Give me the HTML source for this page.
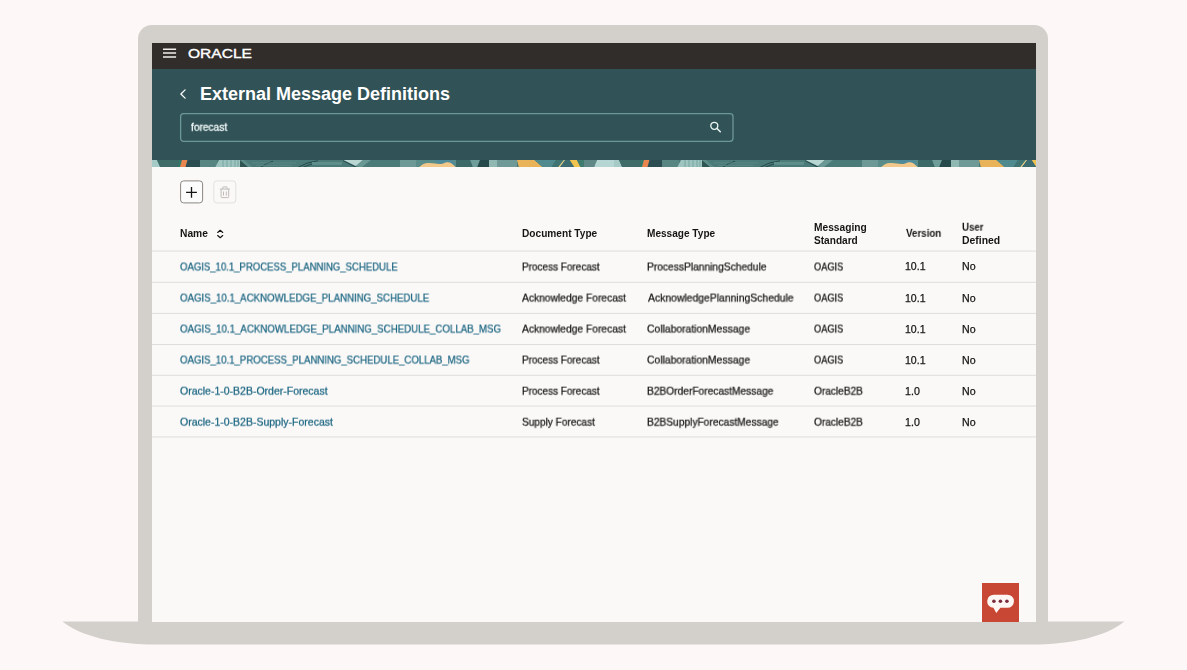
<!DOCTYPE html>
<html lang="en">
<head>
<meta charset="utf-8">
<title>External Message Definitions</title>
<style>
  html, body { margin: 0; padding: 0; }
  body {
    width: 1187px; height: 670px; overflow: hidden; position: relative;
    background: #fdf8f7;
    font-family: "Liberation Sans", sans-serif;
    color: #161513;
  }
  .abs { position: absolute; }
  /* laptop */
  .bezel { left: 138px; top: 25px; width: 910px; height: 610px; background: #d3cfcb; border-radius: 14px 14px 0 0; }
  .base { left: 0; top: 0; width: 1187px; height: 670px; }
  .screen { left: 152px; top: 43px; width: 884px; height: 579px; background: #fbf9f8; overflow: hidden; }
  /* screen content: coordinates relative to the screen (subtract 152, 43) */
  .topbar { left: 0; top: 0; width: 884px; height: 26px; background: #312d2a; }
  .hero { left: 0; top: 26px; width: 884px; height: 98.3px; background: #315357; }
  .strip { left: 0; top: 116.5px; width: 884px; height: 7.8px; }
  .title { left: 48px; top: 39px; font-size: 18px; font-weight: bold; color: #fff; white-space: nowrap; line-height: 24px; }
  .searchtxt { left: 39px; top: 78px; line-height: 12px; font-size: 10.5px; color: #f4fbfa; white-space: nowrap; transform-origin: 0 50%; will-change: transform; transform: translateY(-0.2px) scaleX(0.967); -webkit-text-stroke: 0.3px currentColor; }
  .btn { top: 138px; width: 23px; height: 23px; box-sizing: border-box; border-radius: 3px; background: #fff; }
  .btn.add { left: 28px; border: 1px solid #8b8783; }
  .btn.del { left: 61px; border: 1px solid #e3dfdc; background: #fbf9f8; }
  .th { font-size: 10px; font-weight: bold; line-height: 12px; white-space: nowrap; color: #161513; }
  .td { font-size: 10.5px; line-height: 12px; white-space: nowrap; color: #161513; }
  .td { -webkit-text-stroke: 0.25px currentColor; }
  .lnk { color: #1a6581; }
  .th, .td { transform-origin: 0 50%; will-change: transform; }
  .hl { left: 0; width: 884px; height: 1px; background: #e6e2df; }
  .chat { left: 830px; top: 540px; width: 37px; height: 39px; background: #c74634; }
</style>
</head>
<body>
<div class="abs bezel"></div>
<svg class="abs base" width="1187" height="670" viewBox="0 0 1187 670">
  <path d="M62.5 621.5 H1124.3 C1106 636.5 1072 644.5 1030 644.5 H157 C115 644.5 81 636.5 62.5 621.5 Z" fill="#d3cfcb"/>
</svg>
<div class="abs screen">
  <div class="abs topbar"></div>
  <div class="abs hero"></div>
  <svg class="abs strip" width="884" height="8" viewBox="0 0 884 8" preserveAspectRatio="none">
    <defs><g id="leafband">
      <rect x="0" y="0" width="462" height="8" fill="#4b7b78"/>
      <polygon points="0,0 5,0 8.5,8 0,8" fill="#a6cbc6"/>
      <rect x="8" y="0" width="19" height="8" fill="#3f6b69"/>
      <polygon points="5,0 8,0 11,8 8.5,8" fill="#3f6b69"/>
      <polygon points="27.5,0 30,0 28,8 25.5,8" fill="#2f7a68"/>
      <polygon points="30,0 35.6,0 33.4,8 27.8,8" fill="#e98650"/>
      <polygon points="35.6,0 48,0 48,8 33.4,8" fill="#2b4c50"/>
      <rect x="48" y="0" width="17" height="8" fill="#568582"/>
      <polygon points="67,0 88,0 88,8 63,8" fill="#9ec4bf"/>
      <path d="M71 0v8M75 0v8M79 0v8M83 0v8M86 0v8" stroke="#6f9d99" stroke-width="0.8"/>
      <polygon points="88,0 97,8 88,8" fill="#2f5553"/>
      <polygon points="88,0 92,0 101,8 97,8" fill="#5d8c88"/>
      <path d="M146 7.5 Q155 2 166 0.8 M150 8 Q158 4 167 2.5 M108 8 Q114 3.2 121 1.2" stroke="#23464a" stroke-width="1" fill="none"/>
      <rect x="160" y="2" width="30" height="3" fill="#5f8f8b"/>
      <path d="M100 3h44M104 5.5h36" stroke="#5a8986" stroke-width="0.9"/>
      <polygon points="191,0 211,0 204,6.2" fill="#b8d7d3"/>
      <path d="M191 0.5 L204 7.5" stroke="#23464a" stroke-width="1"/>
      <polygon points="211,0 219,0 209,8 204,6.2" fill="#6a9894"/>
      <rect x="248" y="0" width="16" height="8" fill="#6c9895"/>
      <rect x="264" y="0" width="40" height="8" fill="#5a8d8a"/>
      <polygon points="282,0 300,0 304,5 286,3" fill="#4f8a9a"/>
      <path d="M266.3 8 C270 5 272 3.4 276 3.2 C282 3 284 4.4 288 4.2 C292 4 293 2.2 296 2.4 C300 2.8 302 6 304.5 8 Z" fill="#f3c98b"/>
      <rect x="304" y="0" width="13" height="8" fill="#3c6a68"/>
      <polygon points="318,0 328,0 325,8 321,8" fill="#6f9e9a"/>
      <polygon points="328,0 337,0 337,8 325,8" fill="#264a4c"/>
      <polygon points="317,0 318,0 321,8 317,8" fill="#3c6a68"/>
      <rect x="337" y="0" width="8" height="8" fill="#8fb8b3"/>
      <rect x="345" y="0" width="20" height="8" fill="#6f9996"/>
      <path d="M365 0 H382.5 C386 3 389 6 391.5 8 H367 Z" fill="#e9b35a"/>
      <path d="M382.5 0 H404 L399 8 H391.5 C389 6 386 3 382.5 0 Z" fill="#4f8a8f"/>
      <polygon points="404,0 413,0 407,8 399,8" fill="#3f7473"/>
      <path d="M406.6 8 L412.7 0" stroke="#efd489" stroke-width="1.4"/>
      <polygon points="413,0 417.8,0 422.8,8 407.5,8" fill="#3d6c70"/>
      <polygon points="417.8,0 424.9,0 428.9,8 422.8,8" fill="#f0c44f"/>
      <polygon points="424.9,0 432,0 432,8 428.9,8" fill="#3f7b6f"/>
      <rect x="432" y="0" width="12" height="8" fill="#5f8886"/>
      <polygon points="445,0 462,0 462,8 442,8" fill="#b5d6d2"/>
    </g></defs>
    <use href="#leafband" x="0" y="0"/>
    <use href="#leafband" x="462" y="0"/>
  </svg>
  <div class="abs title">External Message Definitions</div>
  <svg class="abs" style="left:26px;top:68px" width="560" height="32" viewBox="0 0 560 32"><rect x="2.6" y="2.7" width="552.4" height="27.6" rx="3" fill="none" stroke="#6d9698" stroke-width="1.3"/></svg>
  <div class="abs searchtxt">forecast</div>
  <!-- row separators -->
  <svg class="abs" style="left:0;top:200px" width="884" height="200" viewBox="0 0 884 200"><rect x="0" y="7.60" width="884" height="1" fill="#dfdcd9"/><rect x="0" y="38.80" width="884" height="1" fill="#dfdcd9"/><rect x="0" y="69.90" width="884" height="1" fill="#dfdcd9"/><rect x="0" y="100.95" width="884" height="1" fill="#dfdcd9"/><rect x="0" y="131.80" width="884" height="1" fill="#dfdcd9"/><rect x="0" y="162.60" width="884" height="1" fill="#dfdcd9"/><rect x="0" y="193.40" width="884" height="1" fill="#dfdcd9"/></svg>
  <!-- top bar: hamburger + logo -->
  <svg class="abs" style="left:11px;top:5px" width="14" height="10" viewBox="0 0 14 10"><path d="M0 1.2h13.1M0 5.1h13.1M0 9h13.1" stroke="#f1efed" stroke-width="1.5" fill="none"/></svg>
  <svg class="abs" style="left:34px;top:3px" width="70" height="16" viewBox="0 0 70 16"><text x="2" y="11.7" font-family="Liberation Sans, sans-serif" font-size="12" fill="#fff" stroke="#fff" stroke-width="0.35" textLength="64" lengthAdjust="spacingAndGlyphs">ORACLE</text></svg>
  <!-- back chevron -->
  <svg class="abs" style="left:26px;top:44px" width="10" height="14" viewBox="0 0 10 14"><path d="M7.1 2.9 L2.9 7 L7.1 11.1" stroke="#fff" stroke-width="1.3" fill="none" stroke-linecap="round" stroke-linejoin="round"/></svg>
  <!-- search icon -->
  <svg class="abs" style="left:556px;top:77px" width="14" height="14" viewBox="0 0 14 14"><circle cx="6.3" cy="5.8" r="3.5" stroke="#eaf6f4" stroke-width="1.35" fill="none"/><path d="M9 8.5 L12.3 11.7" stroke="#eaf6f4" stroke-width="1.5" stroke-linecap="round"/></svg>
  <!-- plus / trash buttons + icons -->
  <svg class="abs" style="left:27px;top:136px" width="60" height="27" viewBox="0 0 60 27">
    <rect x="1.6" y="1.9" width="22" height="22" rx="3" fill="#fdfcfc" stroke="#8b8783" stroke-width="1"/>
    <path d="M12.5 7.9v10.8M7.1 13.3h10.8" stroke="#161513" stroke-width="1.3" fill="none"/>
    <rect x="34.8" y="1.9" width="22" height="22" rx="3" fill="#fbf9f8" stroke="#e4e0dd" stroke-width="1"/>
    <path d="M40.9 10.1H50.9 M43.7 9.9V8.5a.6.6 0 0 1 .6-.6h3.2a.6.6 0 0 1 .6.6V9.9 M42.1 10.4V17.6a1 1 0 0 0 1 1h5.6a1 1 0 0 0 1-1V10.4 M44.5 12.5v4.1 M47.3 12.5v4.1" stroke="#b7b3af" stroke-width="0.9" fill="none"/>
  </svg>
  <!-- sort icon -->
  <svg class="abs" style="left:64px;top:186px" width="9" height="10" viewBox="0 0 9 10"><path d="M1.7 3.5 L4.2 1.3 L6.7 3.5 M1.7 6.5 L4.2 8.7 L6.7 6.5" stroke="#161513" stroke-width="1.15" fill="none" stroke-linecap="round" stroke-linejoin="round"/></svg>
  <!-- table text -->
  <span class="abs th" style="left:28.00px;top:184px;transform:translateY(0.84px) scaleX(1.0237)">Name</span>
  <span class="abs th" style="left:369.91px;top:184px;transform:translateY(0.84px) scaleX(1.0126)">Document Type</span>
  <span class="abs th" style="left:495.01px;top:184px;transform:translateY(0.84px) scaleX(1.0076)">Message Type</span>
  <span class="abs th" style="left:661.50px;top:178px;transform:translateY(0.73px) scaleX(1.0198)">Messaging</span>
  <span class="abs th" style="left:661.75px;top:191px;transform:translateY(0.84px) scaleX(1.0096)">Standard</span>
  <span class="abs th" style="left:753.62px;top:184px;transform:translateY(0.84px) scaleX(0.9756)">Version</span>
  <span class="abs th" style="left:809.70px;top:178px;transform:translateY(0.73px) scaleX(0.9687)">User</span>
  <span class="abs th" style="left:809.59px;top:191px;transform:translateY(0.84px) scaleX(1.0422)">Defined</span>
  <span class="abs td lnk" style="left:28.33px;top:217px;transform:translateY(0.46px) scaleX(0.9096)">OAGIS_10.1_PROCESS_PLANNING_SCHEDULE</span>
  <span class="abs td" style="left:369.94px;top:217px;transform:translateY(0.46px) scaleX(0.9500)">Process Forecast</span>
  <span class="abs td" style="left:495.03px;top:217px;transform:translateY(0.46px) scaleX(0.9747)">ProcessPlanningSchedule</span>
  <span class="abs td" style="left:661.84px;top:217px;transform:translateY(0.46px) scaleX(0.8797)">OAGIS</span>
  <span class="abs td" style="left:753.12px;top:217px;transform:translateY(0.46px) scaleX(1.0042)">10.1</span>
  <span class="abs td" style="left:809.61px;top:217px;transform:translateY(0.46px) scaleX(1.0125)">No</span>
  <span class="abs td lnk" style="left:28.33px;top:248px;transform:translateY(0.56px) scaleX(0.9204)">OAGIS_10.1_ACKNOWLEDGE_PLANNING_SCHEDULE</span>
  <span class="abs td" style="left:370.46px;top:248px;transform:translateY(0.56px) scaleX(0.9786)">Acknowledge Forecast</span>
  <span class="abs td" style="left:495.56px;top:248px;transform:translateY(0.56px) scaleX(0.9894)">AcknowledgePlanningSchedule</span>
  <span class="abs td" style="left:661.84px;top:248px;transform:translateY(0.56px) scaleX(0.8797)">OAGIS</span>
  <span class="abs td" style="left:753.12px;top:248px;transform:translateY(0.56px) scaleX(1.0042)">10.1</span>
  <span class="abs td" style="left:809.61px;top:248px;transform:translateY(0.56px) scaleX(1.0125)">No</span>
  <span class="abs td lnk" style="left:28.33px;top:279px;transform:translateY(0.56px) scaleX(0.9234)">OAGIS_10.1_ACKNOWLEDGE_PLANNING_SCHEDULE_COLLAB_MSG</span>
  <span class="abs td" style="left:370.46px;top:279px;transform:translateY(0.56px) scaleX(0.9786)">Acknowledge Forecast</span>
  <span class="abs td" style="left:495.29px;top:279px;transform:translateY(0.56px) scaleX(0.9860)">CollaborationMessage</span>
  <span class="abs td" style="left:661.84px;top:279px;transform:translateY(0.56px) scaleX(0.8797)">OAGIS</span>
  <span class="abs td" style="left:753.12px;top:279px;transform:translateY(0.56px) scaleX(1.0042)">10.1</span>
  <span class="abs td" style="left:809.61px;top:279px;transform:translateY(0.56px) scaleX(1.0125)">No</span>
  <span class="abs td lnk" style="left:28.33px;top:310px;transform:translateY(0.56px) scaleX(0.9156)">OAGIS_10.1_PROCESS_PLANNING_SCHEDULE_COLLAB_MSG</span>
  <span class="abs td" style="left:369.94px;top:310px;transform:translateY(0.56px) scaleX(0.9500)">Process Forecast</span>
  <span class="abs td" style="left:495.29px;top:310px;transform:translateY(0.56px) scaleX(0.9860)">CollaborationMessage</span>
  <span class="abs td" style="left:661.84px;top:310px;transform:translateY(0.56px) scaleX(0.8797)">OAGIS</span>
  <span class="abs td" style="left:753.12px;top:310px;transform:translateY(0.56px) scaleX(1.0042)">10.1</span>
  <span class="abs td" style="left:809.61px;top:310px;transform:translateY(0.56px) scaleX(1.0125)">No</span>
  <span class="abs td lnk" style="left:28.30px;top:341px;transform:translateY(0.66px) rotate(0.01deg)">Oracle-1-0-B2B-Order-Forecast</span>
  <span class="abs td" style="left:369.94px;top:341px;transform:translateY(0.66px) scaleX(0.9500)">Process Forecast</span>
  <span class="abs td" style="left:495.03px;top:341px;transform:translateY(0.66px) scaleX(0.9714)">B2BOrderForecastMessage</span>
  <span class="abs td" style="left:661.81px;top:341px;transform:translateY(0.66px) scaleX(0.9619)">OracleB2B</span>
  <span class="abs td" style="left:753.12px;top:341px;transform:translateY(0.66px) scaleX(1.0135)">1.0</span>
  <span class="abs td" style="left:809.61px;top:341px;transform:translateY(0.66px) scaleX(1.0125)">No</span>
  <span class="abs td lnk" style="left:28.30px;top:372px;transform:translateY(0.66px) rotate(0.01deg)">Oracle-1-0-B2B-Supply-Forecast</span>
  <span class="abs td" style="left:370.13px;top:372px;transform:translateY(0.66px) scaleX(0.9615)">Supply Forecast</span>
  <span class="abs td" style="left:495.03px;top:372px;transform:translateY(0.66px) scaleX(0.9721)">B2BSupplyForecastMessage</span>
  <span class="abs td" style="left:661.81px;top:372px;transform:translateY(0.66px) scaleX(0.9619)">OracleB2B</span>
  <span class="abs td" style="left:753.12px;top:372px;transform:translateY(0.66px) scaleX(1.0135)">1.0</span>
  <span class="abs td" style="left:809.61px;top:372px;transform:translateY(0.66px) scaleX(1.0125)">No</span>
  <div class="abs chat"></div>
  <svg class="abs" style="left:830px;top:540px" width="37" height="39" viewBox="0 0 37 39"><path d="M12.1 11.7h13.3a6.5 6.5 0 0 1 0 13.1h-7l-4.1 5.3-2.9-5.3a6.5 6.5 0 0 1 .7-13.1z" fill="#fdf6f2"/><circle cx="11.9" cy="18.2" r="1.8" fill="#7a2c3e"/><circle cx="18.4" cy="18.2" r="1.8" fill="#7a2c3e"/><circle cx="24.9" cy="18.2" r="1.8" fill="#7a2c3e"/></svg>
</div>
</body>
</html>
